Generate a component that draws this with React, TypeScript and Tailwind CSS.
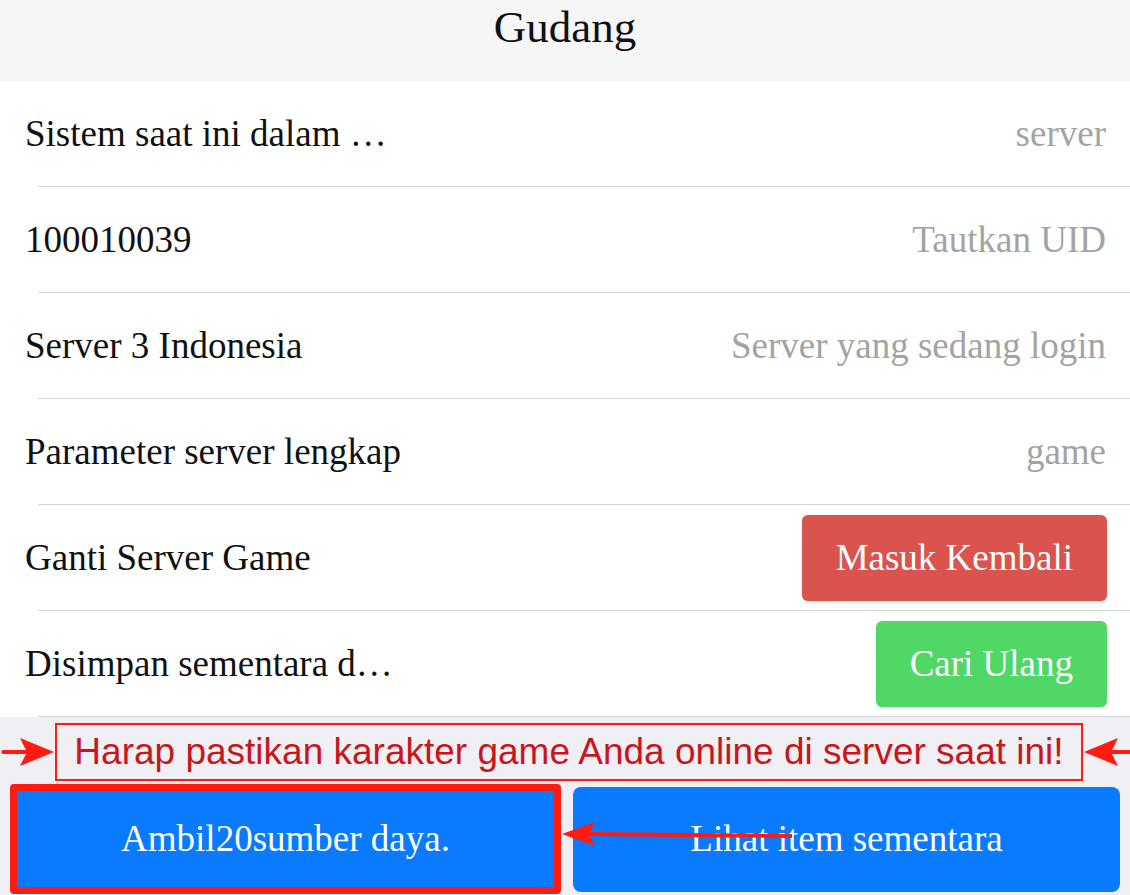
import React from "react";

const serif = { fontFamily: '"Liberation Serif", "Times New Roman", serif' };

type RowProps = {
  label: string;
  value?: string;
  action?: React.ReactNode;
};

function Row({ label, value, action }: RowProps) {
  return (
    <div className="bg-white">
      <div className="h-[105px] flex items-center justify-between pl-[25px] pr-[23px]">
        <span className="text-[37px] text-[#111] whitespace-nowrap">{label}</span>
        {value && <span className="text-[37px] text-[#a3a3a3] whitespace-nowrap pr-[1px]">{value}</span>}
        {action}
      </div>
      <div className="ml-[38px] h-px bg-[#d6d6d6]"></div>
    </div>
  );
}

function ArrowRight() {
  return (
    <svg width="55" height="40" viewBox="0 0 55 40" className="shrink-0">
      <line x1="2" y1="20" x2="30" y2="20" stroke="#ff1a12" strokeWidth="4" />
      <polygon points="20,6 54,20 20,34 27,20" fill="#ff1a12" />
    </svg>
  );
}

function ArrowLeft() {
  return (
    <svg width="47" height="40" viewBox="0 0 47 40" className="shrink-0">
      <line x1="20" y1="20" x2="47" y2="20" stroke="#ff1a12" strokeWidth="4" />
      <polygon points="1,20 35,6 28,20 35,34" fill="#ff1a12" />
    </svg>
  );
}

export default function App() {
  return (
    <div className="w-[1130px] h-[895px] overflow-hidden bg-[#efeff4]" style={serif}>
      {/* Header */}
      <div className="h-[81px] bg-[#f6f6f6] flex justify-center">
        <h1 className="text-[45px] leading-[54px] text-[#111]">Gudang</h1>
      </div>

      <Row label="Sistem saat ini dalam …" value="server" />
      <Row label="100010039" value="Tautkan UID" />
      <Row label="Server 3 Indonesia" value="Server yang sedang login" />
      <Row label="Parameter server lengkap" value="game" />
      <Row
        label="Ganti Server Game"
        action={
          <button className="h-[86px] px-[34px] rounded-[6px] bg-[#d9534f] text-white text-[37px] shadow-[0_1px_2px_rgba(0,0,0,0.15)]">
            Masuk Kembali
          </button>
        }
      />
      <Row
        label="Disimpan sementara d…"
        action={
          <button className="h-[86px] px-[34px] rounded-[6px] bg-[#4fd865] text-white text-[37px] shadow-[0_1px_2px_rgba(0,0,0,0.1)]">
            Cari Ulang
          </button>
        }
      />

      {/* Warning */}
      <div className="flex items-center mt-[6px] h-[58px]">
        <ArrowRight />
        <div className="w-[1029px] h-[58px] border-2 border-[#ff1a12] flex items-center justify-center">
          <span
            className="text-[37px] text-[#c8161d] whitespace-nowrap"
            style={{ fontFamily: '"Liberation Sans", Arial, sans-serif' }}
          >
            Harap pastikan karakter game Anda online di server saat ini!
          </span>
        </div>
        <ArrowLeft />
      </div>

      {/* Buttons */}
      <div className="relative flex items-center gap-[12px] pl-[10px] pr-[10px] mt-[3px]">
        <div className="w-[551px] h-[110px] border-[7px] border-[#ff1a12] rounded-[4px] bg-[#0a7aff] flex items-center justify-center">
          <span className="text-[37px] text-white">Ambil20sumber daya.</span>
        </div>
        <button className="w-[547px] h-[105px] rounded-[8px] bg-[#0a7aff] text-white text-[37px]">
          Lihat item sementara
        </button>
        <svg
          className="absolute left-[560px] top-[36px]"
          width="240"
          height="30"
          viewBox="0 0 240 30"
        >
          <line x1="28" y1="14" x2="232" y2="16" stroke="#ff1a12" strokeWidth="4" />
          <polygon points="2,14 35,2 29,14 35,26" fill="#ff1a12" />
        </svg>
      </div>
    </div>
  );
}
